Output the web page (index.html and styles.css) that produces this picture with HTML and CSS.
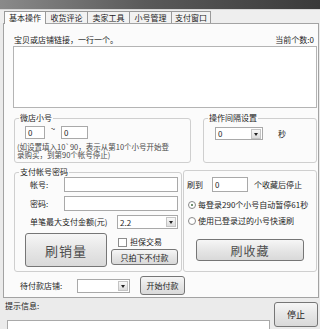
FILE: index.html
```html
<!DOCTYPE html>
<html lang="zh-CN">
<head>
    <meta charset="UTF-8">
    <meta name="viewport" content="width=device-width, initial-scale=1.0">
    <title>基本操作</title>
    <link rel="stylesheet" href="styles.css">
</head>
<body>
    <div class="titlebar"></div>
    <div class="tabs">
        <span class="tab active">基本操作</span>
        <span class="tab">收货评论</span>
        <span class="tab">卖家工具</span>
        <span class="tab">小号管理</span>
        <span class="tab">支付窗口</span>
    </div>

    <div class="panel">
        <div class="link-head">
            <span>宝贝或店铺链接，一行一个。</span>
            <span>当前个数:0</span>
        </div>
        <div class="links"></div>

        <div class="row row-top">
            <fieldset class="group g-range">
                <legend>微店小号</legend>
                <div class="range">
                    <span class="field w20">0</span>
                    <span class="tilde">~</span>
                    <span class="field w27">0</span>
                </div>
                <p class="hint">(如设置填入10`90，表示从第10个小号开始登录购买，到第90个帐号停止)</p>
            </fieldset>
            <fieldset class="group g-interval">
                <legend>操作间隔设置</legend>
                <div class="interval">
                    <span class="select w47"><span class="val">0</span><span class="arrow"></span></span>
                    <span class="unit">秒</span>
                </div>
            </fieldset>
        </div>

        <div class="row row-mid">
            <fieldset class="group g-pay">
                <legend>支付帐号密码</legend>
                <div class="form-row">
                    <span class="lbl">帐号:</span>
                    <span class="field w114"></span>
                </div>
                <div class="form-row">
                    <span class="lbl">密码:</span>
                    <span class="field w114"></span>
                </div>
                <div class="form-row">
                    <span class="lbl lbl-long">单笔最大支付金额(元)</span>
                    <span class="select w61 h14"><span class="val">2.2</span><span class="arrow"></span></span>
                </div>
                <div class="pay-actions">
                    <button class="btn btn-big">刷销量</button>
                    <div class="pay-side">
                        <label class="check"><span class="box"></span>担保交易</label>
                        <button class="btn btn-small">只拍下不付款</button>
                    </div>
                </div>
            </fieldset>
            <fieldset class="group g-fav">
                <div class="fav-row">
                    <span>刷到</span>
                    <span class="field w36">0</span>
                    <span>个收藏后停止</span>
                </div>
                <label class="radio"><span class="dot on"></span>每登录290个小号自动暂停61秒</label>
                <label class="radio"><span class="dot"></span>使用已登录过的小号快速刷</label>
                <button class="btn btn-fav">刷收藏</button>
            </fieldset>
        </div>

        <div class="row row-bottom">
            <span class="shop-lbl">待付款店铺:</span>
            <span class="select w53"><span class="val"></span><span class="arrow"></span></span>
            <button class="btn btn-pay">开始付款</button>
        </div>
    </div>

    <div class="status">
        <div class="status-left">
            <span class="status-lbl">提示信息:</span>
            <div class="status-box"></div>
        </div>
        <button class="btn btn-stop">停止</button>
    </div>
</body>
</html>
```

FILE: styles.css
```css
*{
    box-sizing: border-box;
}
body{
    margin: 0;
    width: 320px;
    height: 329px;
    overflow: hidden;
    background-color: #ebebeb;
    color: #1c1c1c;
    font-family: "Noto Sans CJK SC", "Liberation Sans", sans-serif;
    font-size: 8px;
    line-height: 10px;
    white-space: nowrap;
}
.titlebar{
    height: 10px;
    background: linear-gradient(to right, #8a8a8a, #5a5a5a 45%, #3a3a3a);
    border-bottom: 1px solid #d8d8d8;
}
.tabs{
    display: flex;
    align-items: flex-end;
    height: 13px;
    padding-left: 4px;
    background-color: #eeeeee;
}
.tab{
    width: 43px;
    height: 12px;
    line-height: 11px;
    text-align: center;
    margin-right: -1px;
    border: 1px solid #9a9a9a;
    border-bottom: none;
    background-color: #f2f2f2;
}
.tab:last-child{
    width: 40px;
}
.tab.active{
    width: 42px;
    height: 13px;
    margin-bottom: -1px;
    background-color: #fcfcfc;
    position: relative;
}
.panel{
    margin: 0 1px 0 3px;
    padding: 11px 0 2px 9px;
    border: 1px solid #a3a3a3;
    background-color: #fbfbfb;
}
.link-head{
    display: flex;
    justify-content: space-between;
    padding: 0 4px 0 1px;
    height: 10px;
}
.links{
    margin-top: 1px;
    width: 304px;
    height: 62px;
    border: 1px solid #b4b4b4;
    background-color: #ffffff;
}
.row{
    display: flex;
    align-items: flex-start;
}
.row-top{
    margin-top: 5px;
}
.row-mid{
    margin-top: 4px;
}
.row-bottom{
    margin-top: 4px;
    height: 19px;
    align-items: center;
}
.group{
    margin: 0;
    padding: 0;
    border: 1px solid #cfcfcf;
    border-radius: 3px;
}
.group legend{
    margin-left: 4px;
    padding: 0 1px;
    line-height: 10px;
}
.g-range{
    margin-left: 1px;
    width: 177px;
    height: 50px;
}
.g-interval{
    margin-left: 12px;
    width: 114px;
    height: 50px;
}
.field{
    display: inline-block;
    height: 13px;
    line-height: 11px;
    padding-left: 2px;
    border: 1px solid #a9a9a9;
    background-color: #ffffff;
}
.w20{ width: 20px; }
.w27{ width: 27px; }
.w36{ width: 36px; height: 15px; line-height: 13px; }
.w114{ width: 114px; height: 15px; }
.range{
    display: flex;
    align-items: flex-start;
    margin-top: 3px;
    padding-left: 10px;
}
.tilde{
    width: 16px;
    margin-top: -2px;
    text-align: center;
    line-height: 10px;
}
.hint{
    margin: 4px 0 0 2px;
    width: 158px;
    font-size: 7.5px;
    line-height: 8px;
    color: #4a4a4a;
    white-space: normal;
}
.select{
    display: inline-flex;
    align-items: center;
    height: 13px;
    border: 1px solid #a9a9a9;
    background-color: #ffffff;
}
.select .val{
    flex: 1;
    padding-left: 2px;
    line-height: 11px;
}
.select .arrow{
    width: 10px;
    height: 10px;
    margin-right: 1px;
    border: 1px solid #c4c4c4;
    background: linear-gradient(#f8f8f8, #dcdcdc);
    position: relative;
}
.select .arrow::after{
    content: "";
    position: absolute;
    left: 2px;
    top: 3px;
    border-left: 2px solid transparent;
    border-right: 2px solid transparent;
    border-top: 3px solid #222222;
}
.w47{ width: 48px; }
.w61{ width: 61px; }
.w53{ width: 53px; height: 14px; }
.h14{ height: 14px; }
.interval{
    display: flex;
    align-items: center;
    margin-top: 4px;
    padding-left: 11px;
}
.unit{
    margin-left: 15px;
}
.g-pay{
    margin-left: 1px;
    width: 168px;
    height: 105px;
}
.g-fav{
    margin: 3px 0 0 1px;
    width: 134px;
    height: 102px;
}
.form-row{
    display: flex;
    align-items: center;
    margin-bottom: 4px;
}
.lbl{
    width: 49px;
    padding-left: 15px;
}
.lbl-long{
    width: 102px;
}
.pay-actions{
    display: flex;
    align-items: flex-start;
    padding-left: 10px;
}
.btn{
    margin: 0;
    padding: 0;
    font-family: inherit;
    color: #1c1c1c;
    border: 1px solid #767676;
    border-radius: 3px;
    background: linear-gradient(#f6f6f6, #e6e6e6 50%, #d9d9d9);
}
.btn-big{
    width: 82px;
    height: 34px;
    font-size: 13px;
    color: #4d4d4d;
    letter-spacing: 1px;
}
.pay-side{
    display: flex;
    flex-direction: column;
    margin-left: 4px;
    padding-top: 4px;
}
.check{
    display: flex;
    align-items: center;
    height: 10px;
    margin-left: 7px;
}
.box{
    width: 9px;
    height: 9px;
    margin-right: 3px;
    border: 1px solid #8c8c8c;
    background-color: #ffffff;
}
.btn-small{
    margin-top: 2px;
    width: 67px;
    height: 16px;
    font-size: 8px;
}
.fav-row{
    display: flex;
    align-items: center;
    margin-top: 6px;
    padding-left: 3px;
}
.fav-row .field{
    margin: 0 6px 0 9px;
}
.radio{
    display: flex;
    align-items: center;
    height: 16px;
    padding-left: 4px;
}
.fav-row + .radio{
    margin-top: 5px;
}
.dot{
    width: 8px;
    height: 8px;
    margin-right: 2px;
    border: 1px solid #8a8a8a;
    border-radius: 50%;
    background-color: #ffffff;
    position: relative;
}
.dot.on::after{
    content: "";
    position: absolute;
    left: 2px;
    top: 2px;
    width: 2px;
    height: 2px;
    border-radius: 50%;
    background-color: #3f6b3f;
}
.btn-fav{
    display: block;
    margin: 10px 0 0 12px;
    width: 108px;
    height: 22px;
    font-size: 12px;
    color: #4d4d4d;
    letter-spacing: 1px;
}
.shop-lbl{
    width: 64px;
    padding-left: 7px;
}
.btn-pay{
    margin-left: 10px;
    width: 45px;
    height: 19px;
    font-size: 8px;
}
.status{
    display: flex;
    align-items: flex-start;
    padding: 3px 2px 0 5px;
}
.status-left{
    flex: 1;
}
.status-lbl{
    display: block;
    height: 11px;
}
.status-box{
    margin: 8px 4px 0 2px;
    height: 12px;
    border: 1px solid #a9a9a9;
    background-color: #ffffff;
}
.btn-stop{
    width: 44px;
    height: 25px;
    font-size: 9px;
    margin-top: 1px;
}
```
